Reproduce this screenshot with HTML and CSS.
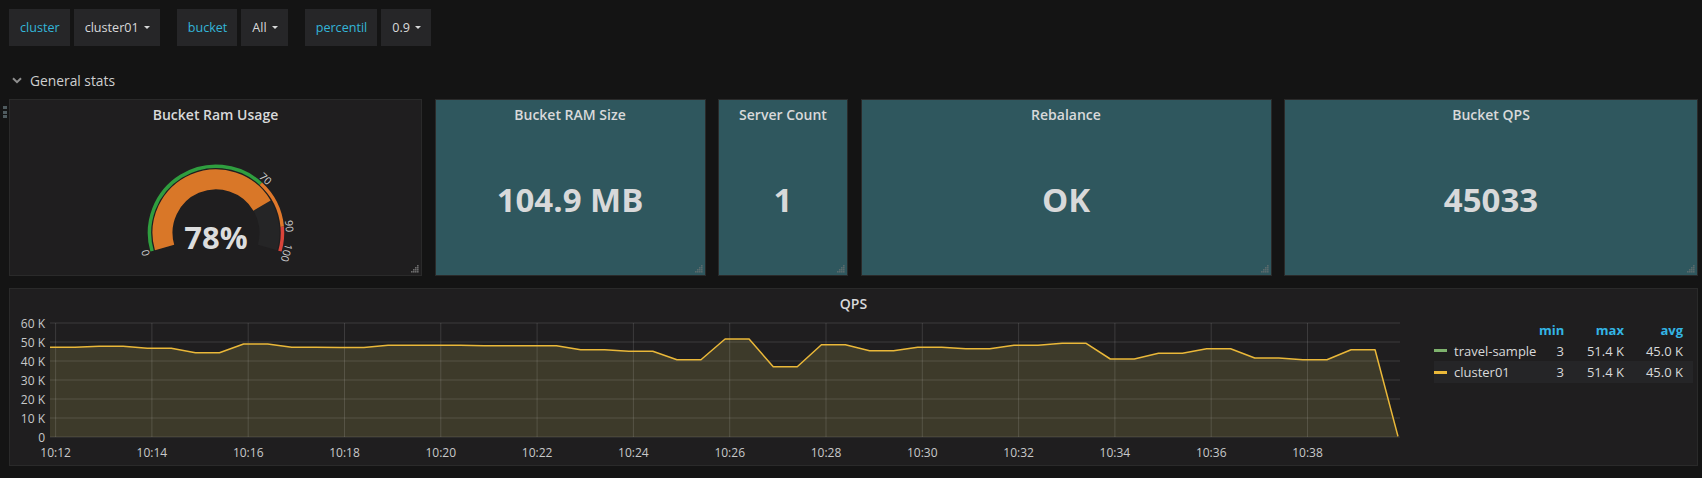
FILE: index.html
```html
<!DOCTYPE html>
<html>
<head>
<meta charset="utf-8">
<link rel="stylesheet" href="styles.css">
</head>
<body>
<div class="dash">
  <div class="submenu">
    <div class="var"><span class="lbl">cluster</span><span class="val">cluster01<i class="caret"></i></span></div>
    <div class="var"><span class="lbl">bucket</span><span class="val">All<i class="caret"></i></span></div>
    <div class="var"><span class="lbl">percentil</span><span class="val">0.9<i class="caret"></i></span></div>
  </div>

  <div class="row-title">
    <svg class="chev" width="10" height="7" viewBox="0 0 10 7"><path d="M1 1.2 L5 5.2 L9 1.2" fill="none" stroke="#8e8e8e" stroke-width="2"/></svg>
    <span>General stats</span>
  </div>

  <div class="stats-row">
    <div class="panel gauge-panel">
      <span class="drag"><i></i><i></i><i></i></span>
      <div class="panel-title">Bucket Ram Usage</div>
      <svg class="gauge" width="411" height="150" viewBox="0 0 411 150">
        <g transform="translate(0 1)">
          <path d="M142.07 125.13 A66.5 66.5 0 0 1 250.84 57.69" fill="none" stroke="#2f9e3f" stroke-width="3.5"/>
          <path d="M250.84 57.69 A66.5 66.5 0 0 1 272.23 100.77" fill="none" stroke="#e0782b" stroke-width="3.5"/>
          <path d="M272.23 100.77 A66.5 66.5 0 0 1 269.93 125.13" fill="none" stroke="#d9443a" stroke-width="3.5"/>
          <path d="M154.57 121.54 A53.5 53.5 0 1 1 257.43 121.54" fill="none" stroke="#252526" stroke-width="20"/>
          <path d="M154.57 121.54 A53.5 53.5 0 0 1 252.03 79.54" fill="none" stroke="#d97728" stroke-width="20"/>
          <text class="tick" x="135.4" y="127" transform="rotate(-106 135.4 127)">0</text>
          <text class="tick" x="255.6" y="52.5" transform="rotate(42.4 255.6 52.5)">70</text>
          <text class="tick" x="279.4" y="100.1" transform="rotate(84.8 279.4 100.1)">90</text>
          <text class="tick" x="276.8" y="127.1" transform="rotate(106 276.8 127.1)">100</text>
          <text class="gauge-val" x="206" y="123">78%</text>
        </g>
      </svg>
      <svg class="resize" width="8" height="8" viewBox="0 0 8 8"><g fill="#6b6b6b"><rect x="6" y="0" width="1.6" height="1.6"/><rect x="4" y="2" width="1.6" height="1.6"/><rect x="6" y="2" width="1.6" height="1.6"/><rect x="2" y="4" width="1.6" height="1.6"/><rect x="4" y="4" width="1.6" height="1.6"/><rect x="6" y="4" width="1.6" height="1.6"/><rect x="0" y="6" width="1.6" height="1.6"/><rect x="2" y="6" width="1.6" height="1.6"/><rect x="4" y="6" width="1.6" height="1.6"/><rect x="6" y="6" width="1.6" height="1.6"/></g></svg>
    </div>

    <div class="panel stat">
      <div class="panel-title">Bucket RAM Size</div>
      <div class="stat-value">104.9 MB</div>
      <svg class="resize" width="8" height="8" viewBox="0 0 8 8"><g fill="#5a6a6c"><rect x="6" y="0" width="1.6" height="1.6"/><rect x="4" y="2" width="1.6" height="1.6"/><rect x="6" y="2" width="1.6" height="1.6"/><rect x="2" y="4" width="1.6" height="1.6"/><rect x="4" y="4" width="1.6" height="1.6"/><rect x="6" y="4" width="1.6" height="1.6"/><rect x="0" y="6" width="1.6" height="1.6"/><rect x="2" y="6" width="1.6" height="1.6"/><rect x="4" y="6" width="1.6" height="1.6"/><rect x="6" y="6" width="1.6" height="1.6"/></g></svg>
    </div>

    <div class="panel stat">
      <div class="panel-title">Server Count</div>
      <div class="stat-value">1</div>
      <svg class="resize" width="8" height="8" viewBox="0 0 8 8"><g fill="#5a6a6c"><rect x="6" y="0" width="1.6" height="1.6"/><rect x="4" y="2" width="1.6" height="1.6"/><rect x="6" y="2" width="1.6" height="1.6"/><rect x="2" y="4" width="1.6" height="1.6"/><rect x="4" y="4" width="1.6" height="1.6"/><rect x="6" y="4" width="1.6" height="1.6"/><rect x="0" y="6" width="1.6" height="1.6"/><rect x="2" y="6" width="1.6" height="1.6"/><rect x="4" y="6" width="1.6" height="1.6"/><rect x="6" y="6" width="1.6" height="1.6"/></g></svg>
    </div>

    <div class="panel stat">
      <div class="panel-title">Rebalance</div>
      <div class="stat-value">OK</div>
      <svg class="resize" width="8" height="8" viewBox="0 0 8 8"><g fill="#5a6a6c"><rect x="6" y="0" width="1.6" height="1.6"/><rect x="4" y="2" width="1.6" height="1.6"/><rect x="6" y="2" width="1.6" height="1.6"/><rect x="2" y="4" width="1.6" height="1.6"/><rect x="4" y="4" width="1.6" height="1.6"/><rect x="6" y="4" width="1.6" height="1.6"/><rect x="0" y="6" width="1.6" height="1.6"/><rect x="2" y="6" width="1.6" height="1.6"/><rect x="4" y="6" width="1.6" height="1.6"/><rect x="6" y="6" width="1.6" height="1.6"/></g></svg>
    </div>

    <div class="panel stat">
      <div class="panel-title">Bucket QPS</div>
      <div class="stat-value">45033</div>
      <svg class="resize" width="8" height="8" viewBox="0 0 8 8"><g fill="#5a6a6c"><rect x="6" y="0" width="1.6" height="1.6"/><rect x="4" y="2" width="1.6" height="1.6"/><rect x="6" y="2" width="1.6" height="1.6"/><rect x="2" y="4" width="1.6" height="1.6"/><rect x="4" y="4" width="1.6" height="1.6"/><rect x="6" y="4" width="1.6" height="1.6"/><rect x="0" y="6" width="1.6" height="1.6"/><rect x="2" y="6" width="1.6" height="1.6"/><rect x="4" y="6" width="1.6" height="1.6"/><rect x="6" y="6" width="1.6" height="1.6"/></g></svg>
    </div>
  </div>

  <div class="panel graph-panel">
    <div class="panel-title">QPS</div>
    <div class="graph-body">
      <svg class="plot" width="1410" height="150" viewBox="0 0 1410 150">
        <g transform="translate(-10 -314)">
          <polygon class="fill" points="50,347.3 75,347.3 99.15,346.3 123.15,346.3 147.3,348.3 171.3,348.3 195.45,352.7 219.45,352.7 243.6,344 267.6,344 291.75,347.3 315.75,347.3 339.9,347.5 363.9,347.5 388.05,345.3 412.05,345.3 436.2,345.3 460.2,345.3 484.35,345.7 508.35,345.7 532.5,345.7 556.5,345.7 580.65,349.7 604.65,349.7 628.8,351.3 652.8,351.3 676.95,359.7 700.95,359.7 725.1,339 749.1,339 773.25,366.7 797.25,366.7 821.4,344.7 845.4,344.7 869.55,350.7 893.55,350.7 917.7,347.3 941.7,347.3 965.85,348.7 989.85,348.7 1014,345.3 1038,345.3 1062.15,343.3 1086.15,343.3 1110.3,359 1134.3,359 1158.45,353.3 1182.45,353.3 1206.6,348.7 1230.6,348.7 1254.75,358 1278.75,358 1302.9,359.7 1326.9,359.7 1351.05,349.7 1375.05,349.7 1398,436.4 1398,437 50,437"/>
          <g class="grid">
            <line x1="50" y1="323" x2="1400" y2="323"/>
            <line x1="50" y1="342" x2="1400" y2="342"/>
            <line x1="50" y1="361" x2="1400" y2="361"/>
            <line x1="50" y1="380" x2="1400" y2="380"/>
            <line x1="50" y1="399" x2="1400" y2="399"/>
            <line x1="50" y1="418" x2="1400" y2="418"/>
            <line x1="50" y1="437" x2="1400" y2="437"/>
            <line x1="55.6" y1="323" x2="55.6" y2="437"/>
            <line x1="151.9" y1="323" x2="151.9" y2="437"/>
            <line x1="248.2" y1="323" x2="248.2" y2="437"/>
            <line x1="344.5" y1="323" x2="344.5" y2="437"/>
            <line x1="440.8" y1="323" x2="440.8" y2="437"/>
            <line x1="537.1" y1="323" x2="537.1" y2="437"/>
            <line x1="633.4" y1="323" x2="633.4" y2="437"/>
            <line x1="729.7" y1="323" x2="729.7" y2="437"/>
            <line x1="826" y1="323" x2="826" y2="437"/>
            <line x1="922.3" y1="323" x2="922.3" y2="437"/>
            <line x1="1018.6" y1="323" x2="1018.6" y2="437"/>
            <line x1="1114.9" y1="323" x2="1114.9" y2="437"/>
            <line x1="1211.2" y1="323" x2="1211.2" y2="437"/>
            <line x1="1307.5" y1="323" x2="1307.5" y2="437"/>
          </g>
          <polyline class="line" points="50,347.3 75,347.3 99.15,346.3 123.15,346.3 147.3,348.3 171.3,348.3 195.45,352.7 219.45,352.7 243.6,344 267.6,344 291.75,347.3 315.75,347.3 339.9,347.5 363.9,347.5 388.05,345.3 412.05,345.3 436.2,345.3 460.2,345.3 484.35,345.7 508.35,345.7 532.5,345.7 556.5,345.7 580.65,349.7 604.65,349.7 628.8,351.3 652.8,351.3 676.95,359.7 700.95,359.7 725.1,339 749.1,339 773.25,366.7 797.25,366.7 821.4,344.7 845.4,344.7 869.55,350.7 893.55,350.7 917.7,347.3 941.7,347.3 965.85,348.7 989.85,348.7 1014,345.3 1038,345.3 1062.15,343.3 1086.15,343.3 1110.3,359 1134.3,359 1158.45,353.3 1182.45,353.3 1206.6,348.7 1230.6,348.7 1254.75,358 1278.75,358 1302.9,359.7 1326.9,359.7 1351.05,349.7 1375.05,349.7 1398,436.4"/>
          <g class="ylab">
            <text x="45" y="327.5">60 K</text>
            <text x="45" y="346.5">50 K</text>
            <text x="45" y="365.5">40 K</text>
            <text x="45" y="384.5">30 K</text>
            <text x="45" y="403.5">20 K</text>
            <text x="45" y="422.5">10 K</text>
            <text x="45" y="441.5">0</text>
          </g>
          <g class="xlab">
            <text x="55.6" y="456.5">10:12</text>
            <text x="151.9" y="456.5">10:14</text>
            <text x="248.2" y="456.5">10:16</text>
            <text x="344.5" y="456.5">10:18</text>
            <text x="440.8" y="456.5">10:20</text>
            <text x="537.1" y="456.5">10:22</text>
            <text x="633.4" y="456.5">10:24</text>
            <text x="729.7" y="456.5">10:26</text>
            <text x="826" y="456.5">10:28</text>
            <text x="922.3" y="456.5">10:30</text>
            <text x="1018.6" y="456.5">10:32</text>
            <text x="1114.9" y="456.5">10:34</text>
            <text x="1211.2" y="456.5">10:36</text>
            <text x="1307.5" y="456.5">10:38</text>
          </g>
        </g>
      </svg>
      <div class="legend">
        <div class="lg-row lg-head">
          <span></span><span>min</span><span>max</span><span>avg</span>
        </div>
        <div class="lg-row">
          <span class="lg-name"><i class="sw green"></i>travel-sample</span><span>3</span><span>51.4 K</span><span>45.0 K</span>
        </div>
        <div class="lg-row alt">
          <span class="lg-name"><i class="sw yellow"></i>cluster01</span><span>3</span><span>51.4 K</span><span>45.0 K</span>
        </div>
      </div>
    </div>
  </div>
</div>
</body>
</html>
```

FILE: styles.css
```css
* { box-sizing: border-box; }
html, body { margin: 0; padding: 0; }
body {
  width: 1702px;
  height: 478px;
  overflow: hidden;
  background: #141414;
  color: #d8d9da;
  font-family: "Open Sans", "Liberation Sans", sans-serif;
}
.dash { padding: 9px 4px 0 9px; }

/* template variables */
.submenu { display: flex; height: 37px; }
.var { display: flex; gap: 4px; margin-right: 17px; }
.lbl, .val {
  display: flex;
  align-items: center;
  height: 37px;
  padding: 0 10px 0 11px;
  background: #262628;
  font-size: 12.6px;
}
.lbl { color: #33b5d8; }
.val { color: #d8d9da; }
.caret {
  display: inline-block;
  width: 0; height: 0;
  margin-left: 5px;
  border-left: 3px solid transparent;
  border-right: 3px solid transparent;
  border-top: 3px solid #d8d9da;
}

/* row header */
.row-title {
  display: flex;
  align-items: center;
  height: 20px;
  margin: 24px 0 9px 3px;
  gap: 8px;
  font-size: 13.8px;
  color: #cfcfcf;
}

/* panels */
.stats-row {
  display: grid;
  grid-template-columns: 413px 271px 130px 411px 414px;
  column-gap: 12.5px;
  height: 177px;
}
.panel {
  position: relative;
  border: 1px solid #2a2a2a;
  background: #1f1e1f;
  display: flex;
  flex-direction: column;
}
.panel-title {
  text-align: center;
  font-size: 14px;
  font-weight: 600;
  line-height: 20px;
  padding-top: 5px;
  color: #d8d9da;
  flex: none;
}
.stat { background: #2f575e; }
.stat-value {
  flex: 1;
  display: flex;
  align-items: center;
  justify-content: center;
  font-size: 33px;
  font-weight: 700;
  line-height: 1;
  color: #d8d9da;
  padding-bottom: 1px;
}
.resize { position: absolute; right: 2px; bottom: 2px; }
.drag {
  position: absolute;
  left: -7px;
  top: 6px;
  display: flex;
  flex-direction: column;
  gap: 1.5px;
}
.drag i { display: block; width: 4px; height: 3px; background: #4f5b5f; }

.gauge { display: block; }
.gauge .tick {
  font-size: 10.5px;
  fill: #d0d1d2;
  text-anchor: middle;
  dominant-baseline: central;
}
.gauge-val {
  font-size: 31px;
  font-weight: 700;
  fill: #dcdddd;
  text-anchor: middle;
}

/* graph */
.graph-panel { margin-top: 12px; height: 178px; }
.graph-body { display: flex; flex: 1; }
.plot { display: block; flex: none; }
.plot .fill { fill: #3d3a2a; }
.plot .grid line { stroke: rgba(255,255,255,0.13); stroke-width: 1; }
.plot .line { fill: none; stroke: #eab839; stroke-width: 1.5; stroke-linejoin: round; }
.plot text { font-size: 12px; fill: #c8c9ca; font-family: "Open Sans", "Liberation Sans", sans-serif; }
.plot .ylab text { text-anchor: end; }
.plot .xlab text { text-anchor: middle; }

.legend {
  margin-left: 14px;
  padding-top: 6px;
  width: 259px;
  font-size: 13px;
}
.lg-row {
  display: grid;
  grid-template-columns: 105px 25px 60px 59px;
  padding-right: 10px;
  height: 21px;
  align-items: center;
  white-space: nowrap;
}
.lg-row > span { text-align: right; }
.lg-row > span.lg-name { text-align: left; display: flex; align-items: center; }
.lg-head { height: 20px; font-weight: 700; color: #33b5e5; }
.lg-row.alt { background: #252527; height: 22px; }
.sw { display: inline-block; width: 13px; height: 3px; margin-right: 7px; }
.sw.green { background: #7eb26d; }
.sw.yellow { background: #eab839; }
```
